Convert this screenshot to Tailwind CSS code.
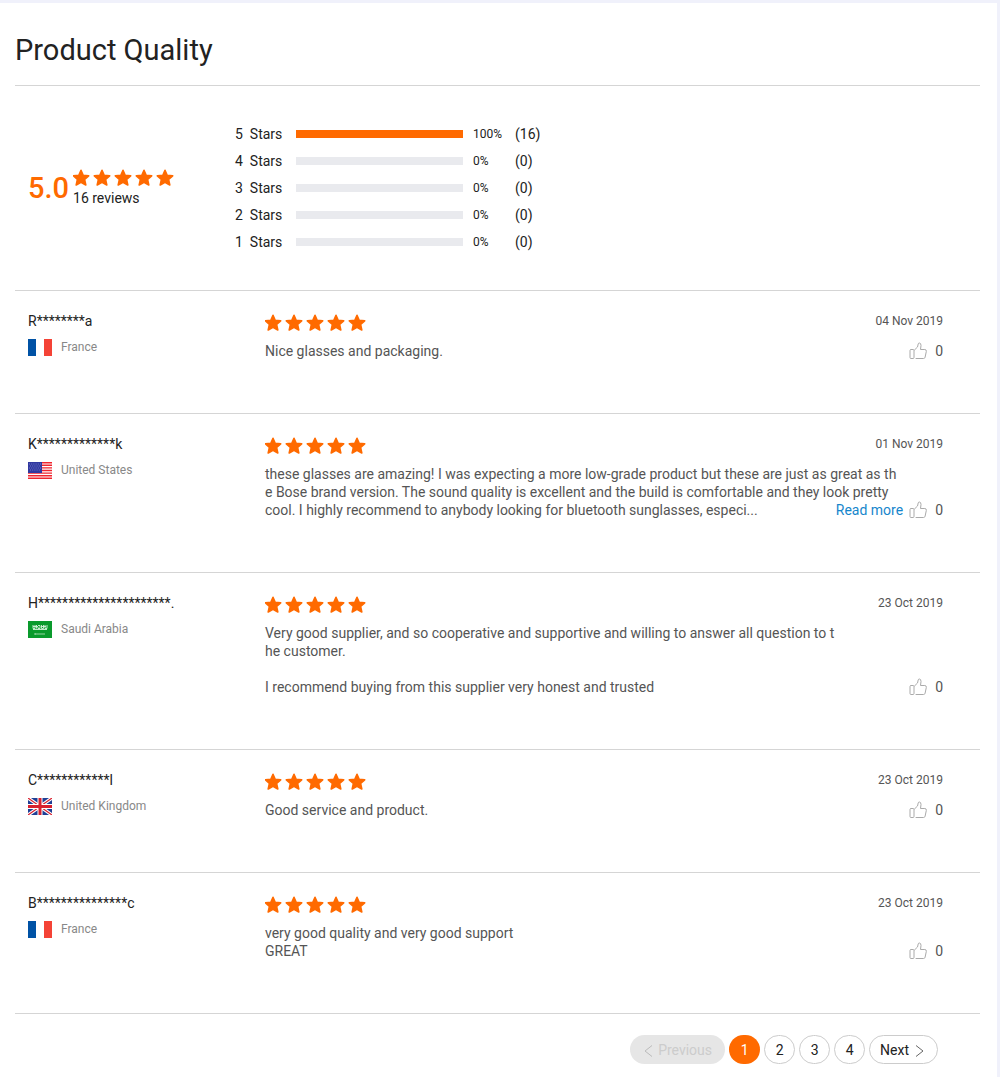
<!DOCTYPE html>
<html lang="en">
<head>
    <meta charset="UTF-8">
    <meta name="viewport" content="width=device-width, initial-scale=1">
    <title>Product Quality</title>
    <script src="https://cdn.jsdelivr.net/npm/@tailwindcss/browser@4"></script>
</head>
<body class="min-h-screen bg-[#f0f1fb] font-['Roboto','Liberation_Sans',sans-serif] text-sm leading-[18px] text-[#222]">

    <!-- Shared icons -->
    <svg class="hidden">
        <symbol id="star" viewBox="0 0 18 18">
            <path stroke-linejoin="round" stroke-width="1.600" stroke="currentColor" d="M9 1.300l2.200 5 5.500.5-4.100 3.700 1.200 5.500L9 13.200 4.200 16l1.200-5.500L1.300 6.800l5.500-.5z"/>
        </symbol>
        <symbol id="stars" viewBox="1 0 102 18">
            <use href="#star" x="0" width="18" height="18"/>
            <use href="#star" x="21" width="18" height="18"/>
            <use href="#star" x="42" width="18" height="18"/>
            <use href="#star" x="63" width="18" height="18"/>
            <use href="#star" x="84" width="18" height="18"/>
        </symbol>
        <symbol id="thumb" viewBox="0 0 18 18">
            <path fill="none" stroke="currentColor" stroke-linejoin="round" stroke-linecap="round" d="M2 7.500h2q1 0 1 1v7q0 1-1 1H2q-1 0-1-1v-7q0-1 1-1M7 16.500h7.500q1.300 0 1.600-1.300l1.200-5.700q.3-2-1.500-2h-4.300l.5-4q0-2.500-1.600-2.500-1 0-1.200 1L8.500 5 5.500 8"/>
        </symbol>
        <symbol id="france" viewBox="0 0 24 17">
            <path fill="#fff" d="M0 0h24v17H0z"/>
            <path fill="#0052a5" d="M0 0h8v17H0z"/>
            <path fill="#f44336" d="M16 0h8v17h-8z"/>
        </symbol>
        <symbol id="usa" viewBox="0 0 24 17">
            <path fill="#fff" d="M0 0h24v17H0z"/>
            <path stroke="#f0242e" stroke-width="1.4" d="M0 .7h24M0 3.300h24M0 5.900h24M0 8.500h24M0 11.100h24M0 13.700h24M0 16.300h24"/>
            <path fill="#3038a0" d="M0 0h14v11H0z"/>
            <path stroke="#8f94d8" stroke-width=".7" stroke-dasharray="1 1.200" d="M1 2h12M2 4h11M1 6h12M2 8h11"/>
        </symbol>
        <symbol id="saudi" viewBox="0 0 24 17">
            <path fill="#0a9a2c" d="M0 0h24v17H0z"/>
            <path fill="none" stroke="#d5f0da" stroke-width=".9" d="M5 4v3.500h2V4M8.500 4v3.500M10 4.500h2v3h-2V6M13.500 4v3.500h2V4M17 4v3.500h2V4M5 8.500h14M5 5.500h5M13 5.500h5"/>
            <path stroke="#a5dcb0" stroke-width=".9" d="M7 13h10M7 12v2"/>
        </symbol>
        <symbol id="uk" viewBox="0 0 24 17">
            <path fill="#1f3f95" d="M0 0h24v17H0z"/>
            <path stroke="#fff" stroke-width="3.400" d="M0 0l24 17M24 0L0 17"/>
            <path stroke="#d8202f" stroke-width="1.200" d="M0 0l24 17M24 0L0 17"/>
            <path stroke="#fff" stroke-width="5" d="M12 0v17M0 8.500h24"/>
            <path stroke="#d8202f" stroke-width="3" d="M12 0v17M0 8.500h24"/>
        </symbol>
    </svg>

    <div class="pt-[3px] pr-[3px]">
        <main class="min-h-[calc(100vh-3px)] bg-white pr-[17px] pl-[15px]">
            <h1 class="border-b border-[#d5d5d5] pt-[29px] pb-[17px] text-[29px] leading-9">Product Quality</h1>

            <!-- Rating summary -->
            <section class="flex border-b border-[#d5d5d5] pt-[34px] pb-[35px]">
                <div class="flex w-[220px] items-center gap-1 pl-[13px]">
                    <span class="text-[29px] leading-9 font-medium text-[#ff6a00]">5.0</span>
                    <div>
                        <svg class="mb-[2px] h-[18px] w-[102px] fill-current text-[#ff6a00]" role="img" aria-label="5 out of 5 stars"><use href="#stars"/></svg>
                        <p>16 reviews</p>
                    </div>
                </div>
                <table>
                    <tbody>
                        <tr class="h-[27px]">
                            <th class="w-[61px] text-left font-normal whitespace-pre">5  Stars</th>
                            <td class="w-[167px]"><div class="h-2 bg-[#e9eaee]"><div class="h-2 bg-[#ff6a00]" style="width: 100%"></div></div></td>
                            <td class="w-[52px] pl-[10px] text-xs">100%</td>
                            <td>(16)</td>
                        </tr>
                        <tr class="h-[27px]">
                            <th class="text-left font-normal whitespace-pre">4  Stars</th>
                            <td><div class="h-2 bg-[#e9eaee]"></div></td>
                            <td class="pl-[10px] text-xs">0%</td>
                            <td>(0)</td>
                        </tr>
                        <tr class="h-[27px]">
                            <th class="text-left font-normal whitespace-pre">3  Stars</th>
                            <td><div class="h-2 bg-[#e9eaee]"></div></td>
                            <td class="pl-[10px] text-xs">0%</td>
                            <td>(0)</td>
                        </tr>
                        <tr class="h-[27px]">
                            <th class="text-left font-normal whitespace-pre">2  Stars</th>
                            <td><div class="h-2 bg-[#e9eaee]"></div></td>
                            <td class="pl-[10px] text-xs">0%</td>
                            <td>(0)</td>
                        </tr>
                        <tr class="h-[27px]">
                            <th class="text-left font-normal whitespace-pre">1  Stars</th>
                            <td><div class="h-2 bg-[#e9eaee]"></div></td>
                            <td class="pl-[10px] text-xs">0%</td>
                            <td>(0)</td>
                        </tr>
                    </tbody>
                </table>
            </section>

            <!-- Reviews -->
            <article class="flex border-b border-[#d5d5d5] pt-[21px] pr-[37px] pb-[53px] pl-[13px]">
                <div class="w-[237px] shrink-0">
                    <p>R********a</p>
                    <p class="mt-2 flex items-center gap-[9px] text-xs leading-[18px] text-[#888]"><svg class="h-[17px] w-6"><use href="#france"/></svg>France</p>
                </div>
                <div class="flex-1">
                    <div class="flex items-start justify-between">
                        <svg class="mt-[2px] h-[18px] w-[102px] fill-current text-[#ff6a00]" role="img" aria-label="5 out of 5 stars"><use href="#stars"/></svg>
                        <time class="text-xs leading-[18px] text-[#555]">04 Nov 2019</time>
                    </div>
                    <div class="mt-[10px] grid text-[#555]">
                        <p class="col-start-1 row-start-1">Nice glasses and packaging.</p>
                        <div class="col-start-1 row-start-1 flex gap-[6px] place-self-end">
                            <button class="flex items-center gap-2" aria-label="Helpful"><svg class="h-[18px] w-[18px] text-[#aaa]"><use href="#thumb"/></svg>0</button>
                        </div>
                    </div>
                </div>
            </article>

            <article class="flex border-b border-[#d5d5d5] pt-[21px] pr-[37px] pb-[53px] pl-[13px]">
                <div class="w-[237px] shrink-0">
                    <p>K*************k</p>
                    <p class="mt-2 flex items-center gap-[9px] text-xs leading-[18px] text-[#888]"><svg class="h-[17px] w-6"><use href="#usa"/></svg>United States</p>
                </div>
                <div class="flex-1">
                    <div class="flex items-start justify-between">
                        <svg class="mt-[2px] h-[18px] w-[102px] fill-current text-[#ff6a00]" role="img" aria-label="5 out of 5 stars"><use href="#stars"/></svg>
                        <time class="text-xs leading-[18px] text-[#555]">01 Nov 2019</time>
                    </div>
                    <div class="mt-[10px] grid text-[#555]">
                        <p class="col-start-1 row-start-1">these glasses are amazing! I was expecting a more low-grade product but these are just as great as th<br>e Bose brand version. The sound quality is excellent and the build is comfortable and they look pretty<br>cool. I highly recommend to anybody looking for bluetooth sunglasses, especi...</p>
                        <div class="col-start-1 row-start-1 flex gap-[6px] place-self-end">
                            <a href="#" class="text-[#1686cc]">Read more</a>
                            <button class="flex items-center gap-2" aria-label="Helpful"><svg class="h-[18px] w-[18px] text-[#aaa]"><use href="#thumb"/></svg>0</button>
                        </div>
                    </div>
                </div>
            </article>

            <article class="flex border-b border-[#d5d5d5] pt-[21px] pr-[37px] pb-[53px] pl-[13px]">
                <div class="w-[237px] shrink-0">
                    <p>H**********************.</p>
                    <p class="mt-2 flex items-center gap-[9px] text-xs leading-[18px] text-[#888]"><svg class="h-[17px] w-6"><use href="#saudi"/></svg>Saudi Arabia</p>
                </div>
                <div class="flex-1">
                    <div class="flex items-start justify-between">
                        <svg class="mt-[2px] h-[18px] w-[102px] fill-current text-[#ff6a00]" role="img" aria-label="5 out of 5 stars"><use href="#stars"/></svg>
                        <time class="text-xs leading-[18px] text-[#555]">23 Oct 2019</time>
                    </div>
                    <div class="mt-[10px] grid text-[#555]">
                        <p class="col-start-1 row-start-1">Very good supplier, and so cooperative and supportive and willing to answer all question to t<br>he customer.<br><br>I recommend buying from this supplier very honest and trusted</p>
                        <div class="col-start-1 row-start-1 flex gap-[6px] place-self-end">
                            <button class="flex items-center gap-2" aria-label="Helpful"><svg class="h-[18px] w-[18px] text-[#aaa]"><use href="#thumb"/></svg>0</button>
                        </div>
                    </div>
                </div>
            </article>

            <article class="flex border-b border-[#d5d5d5] pt-[21px] pr-[37px] pb-[53px] pl-[13px]">
                <div class="w-[237px] shrink-0">
                    <p>C************l</p>
                    <p class="mt-2 flex items-center gap-[9px] text-xs leading-[18px] text-[#888]"><svg class="h-[17px] w-6"><use href="#uk"/></svg>United Kingdom</p>
                </div>
                <div class="flex-1">
                    <div class="flex items-start justify-between">
                        <svg class="mt-[2px] h-[18px] w-[102px] fill-current text-[#ff6a00]" role="img" aria-label="5 out of 5 stars"><use href="#stars"/></svg>
                        <time class="text-xs leading-[18px] text-[#555]">23 Oct 2019</time>
                    </div>
                    <div class="mt-[10px] grid text-[#555]">
                        <p class="col-start-1 row-start-1">Good service and product.</p>
                        <div class="col-start-1 row-start-1 flex gap-[6px] place-self-end">
                            <button class="flex items-center gap-2" aria-label="Helpful"><svg class="h-[18px] w-[18px] text-[#aaa]"><use href="#thumb"/></svg>0</button>
                        </div>
                    </div>
                </div>
            </article>

            <article class="flex border-b border-[#d5d5d5] pt-[21px] pr-[37px] pb-[53px] pl-[13px]">
                <div class="w-[237px] shrink-0">
                    <p>B***************c</p>
                    <p class="mt-2 flex items-center gap-[9px] text-xs leading-[18px] text-[#888]"><svg class="h-[17px] w-6"><use href="#france"/></svg>France</p>
                </div>
                <div class="flex-1">
                    <div class="flex items-start justify-between">
                        <svg class="mt-[2px] h-[18px] w-[102px] fill-current text-[#ff6a00]" role="img" aria-label="5 out of 5 stars"><use href="#stars"/></svg>
                        <time class="text-xs leading-[18px] text-[#555]">23 Oct 2019</time>
                    </div>
                    <div class="mt-[10px] grid text-[#555]">
                        <p class="col-start-1 row-start-1">very good quality and very good support<br>GREAT</p>
                        <div class="col-start-1 row-start-1 flex gap-[6px] place-self-end">
                            <button class="flex items-center gap-2" aria-label="Helpful"><svg class="h-[18px] w-[18px] text-[#aaa]"><use href="#thumb"/></svg>0</button>
                        </div>
                    </div>
                </div>
            </article>

            <!-- Pagination -->
            <nav class="flex justify-end gap-1 pt-[21px] pr-[42px]" aria-label="Pagination">
                <button disabled class="flex h-[29px] items-center gap-[5px] rounded-full bg-[#e6e6e6] px-[13px] text-[#ccc]">
                    <svg class="mt-[3px] h-3 w-[10px]" viewBox="0 0 10 12" fill="none" stroke="#bbb"><path d="M9 .5L2 6l7 5.500"/></svg>Previous
                </button>
                <button class="h-[29px] w-[31px] rounded-full bg-[#ff6a00] text-white" aria-current="page">1</button>
                <button class="h-[29px] w-[31px] rounded-full border border-[#ccc]">2</button>
                <button class="h-[29px] w-[31px] rounded-full border border-[#ccc]">3</button>
                <button class="h-[29px] w-[31px] rounded-full border border-[#ccc]">4</button>
                <button class="flex h-[29px] items-center gap-[6px] rounded-full border border-[#ccc] pr-3 pl-[10px]">
                    Next<svg class="mt-[3px] h-3 w-[10px]" viewBox="0 0 10 12" fill="none" stroke="#666"><path d="M1 .5L8 6l-7 5.500"/></svg>
                </button>
            </nav>
        </main>
    </div>
</body>
</html>
